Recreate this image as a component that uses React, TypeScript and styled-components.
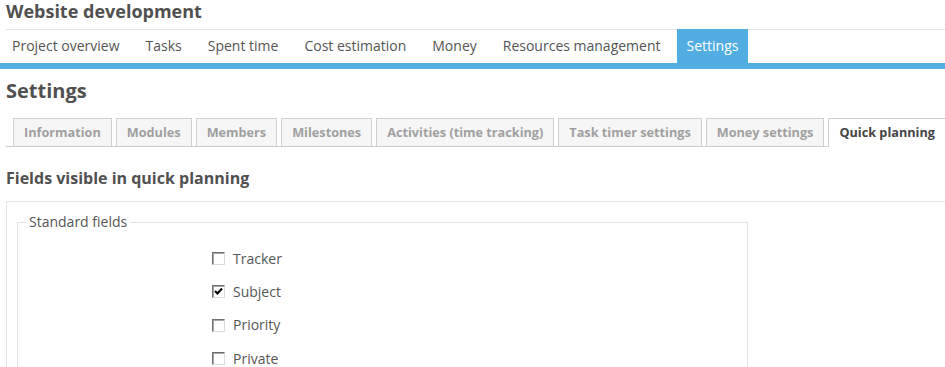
import React from "react";
import styled, { createGlobalStyle } from "styled-components";

const Global = createGlobalStyle`
  html, body { margin: 0; padding: 0; background: #fff; overflow: hidden; }
  body { font-family: "Open Sans", "Liberation Sans", sans-serif; color: #555; }
  * { box-sizing: border-box; }
`;

const Page = styled.div`
  width: 945px;
  padding-top: 1px;
`;

const ProjectTitle = styled.h1`
  margin: 0 0 8px 6px;
  font-size: 18px;
  line-height: 20px;
  font-weight: 700;
  color: #505050;
`;

const MainNav = styled.nav`
  margin-left: 6px;
  border-top: 1px solid #e5e5e5;
  height: 34px;
`;

const MenuList = styled.ul`
  display: flex;
  gap: 6px;
  list-style: none;
  margin: -1px 0 0 -4px;
  padding: 0;
`;

const MenuItem = styled.li<{ $active?: boolean }>`
  height: 34px;
  padding: 0 10px;
  font-size: 14px;
  line-height: 34px;
  white-space: nowrap;
  color: ${(p) => (p.$active ? "#fff" : "#555")};
  background: ${(p) => (p.$active ? "#51ade2" : "transparent")};
`;

const BlueBar = styled.div`
  height: 6px;
  background: #51ade2;
`;

const SectionTitle = styled.h2`
  margin: 11px 0 0 6px;
  font-size: 20px;
  line-height: 22px;
  font-weight: 700;
  color: #505050;
`;

const TabStrip = styled.ul`
  display: flex;
  gap: 4px;
  list-style: none;
  margin: 16px 0 0 6px;
  padding: 0 0 0 7px;
  border-bottom: 1px solid #cfcfcf;
  height: 29px;
`;

const Tab = styled.li<{ $active?: boolean }>`
  height: ${(p) => (p.$active ? "29px" : "28px")};
  padding: 0 10px;
  border: 1px solid #d0d0d0;
  border-bottom: 0;
  background: ${(p) => (p.$active ? "#fff" : "#f6f6f6")};
  font-size: 12.7px;
  font-weight: 700;
  line-height: 27px;
  white-space: nowrap;
  color: ${(p) => (p.$active ? "#444" : "#a0a0a0")};
`;

const SubTitle = styled.h3`
  margin: 21px 0 0 6px;
  font-size: 16px;
  line-height: 20px;
  font-weight: 700;
  color: #505050;
`;

const Box = styled.div`
  margin: 13px 0 0 6px;
  padding: 10px 0 20px 10px;
  border-top: 1px solid #e2e2e2;
  border-left: 1px solid #e2e2e2;
`;

const FieldSet = styled.fieldset`
  width: 731px;
  margin: 0;
  padding: 10px 8px 10px 8px;
  border: 1px solid #e2e2e2;
`;

const Legend = styled.legend`
  padding: 0 3px;
  font-size: 14px;
  line-height: 20px;
  color: #555;
`;

const FieldGrid = styled.div`
  display: grid;
  grid-template-columns: 186px 1fr;
  grid-auto-rows: 33.33px;
  align-items: center;
`;

const RowLabel = styled.div``;

const CheckLabel = styled.label`
  display: flex;
  align-items: center;
  gap: 8px;
  font-size: 14px;
  line-height: 20px;
  color: #555;
`;

const Check = styled.span`
  position: relative;
  display: inline-block;
  width: 13px;
  height: 13px;
  border-top: 1px solid #6e6e6e;
  border-left: 1px solid #6e6e6e;
  border-right: 1px solid #dcdcdc;
  border-bottom: 1px solid #dcdcdc;
  background: #fff;
  box-shadow: inset 1px 1px 0 #a8a8a8;
`;

const CheckMark = styled.svg`
  position: absolute;
  left: 1px;
  top: 1px;
`;

const fields = [
  { name: "Tracker", checked: false },
  { name: "Subject", checked: true },
  { name: "Priority", checked: false },
  { name: "Private", checked: false },
];

const menu = [
  "Project overview",
  "Tasks",
  "Spent time",
  "Cost estimation",
  "Money",
  "Resources management",
  "Settings",
];

const tabs = [
  "Information",
  "Modules",
  "Members",
  "Milestones",
  "Activities (time tracking)",
  "Task timer settings",
  "Money settings",
  "Quick planning",
];

export default function App() {
  return (
    <Page>
      <Global />
      <ProjectTitle>Website development</ProjectTitle>
      <MainNav>
        <MenuList>
          {menu.map((m) => (
            <MenuItem key={m} $active={m === "Settings"}>
              {m}
            </MenuItem>
          ))}
        </MenuList>
      </MainNav>
      <BlueBar />
      <SectionTitle>Settings</SectionTitle>
      <TabStrip>
        {tabs.map((t) => (
          <Tab key={t} $active={t === "Quick planning"}>
            {t}
          </Tab>
        ))}
      </TabStrip>
      <SubTitle>Fields visible in quick planning</SubTitle>
      <Box>
        <FieldSet>
          <Legend>Standard fields</Legend>
          <FieldGrid>
            {fields.map((f) => (
              <React.Fragment key={f.name}>
                <RowLabel />
                <CheckLabel>
                  <Check>
                    {f.checked && (
                      <CheckMark width="9" height="9" viewBox="0 0 9 9">
                        <path d="M1 4 L3.5 6.5 L8 1.5" fill="none" stroke="#000" strokeWidth="2" />
                      </CheckMark>
                    )}
                  </Check>
                  {f.name}
                </CheckLabel>
              </React.Fragment>
            ))}
          </FieldGrid>
        </FieldSet>
      </Box>
    </Page>
  );
}
